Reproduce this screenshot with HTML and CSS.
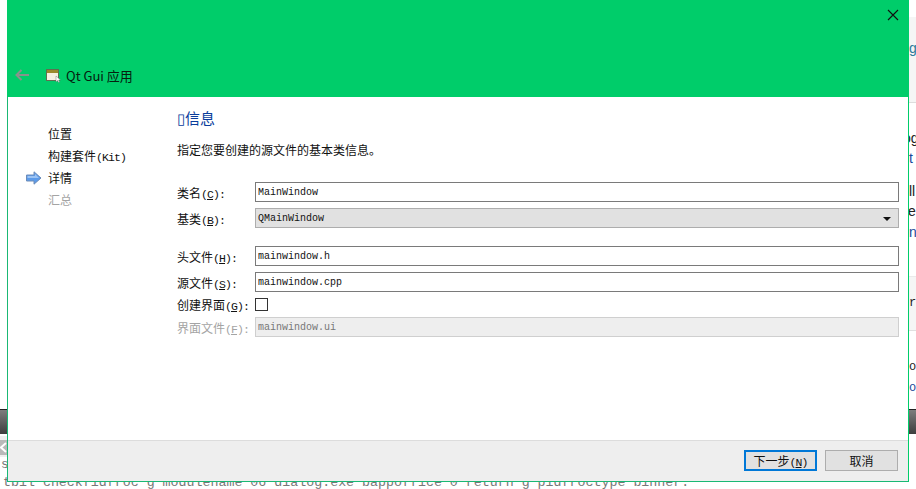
FILE: index.html
```html
<!DOCTYPE html>
<html lang="zh-CN">
<head>
<meta charset="utf-8">
<title>Qt Gui 应用</title>
<link rel="stylesheet" href="styles.css">
</head>
<body>
<div class="desk-left">
  <div class="desk-dark"></div>
  <div class="desk-band"></div>
  <div class="desk-share">
    <svg width="7" height="15" viewBox="0 0 7 15"><path d="M6 3 1 7.5 6 12" stroke="#fff" stroke-width="2" fill="none"/></svg>
  </div>
  <span class="peek p0">s</span>
</div>
<div class="desk-right">
  <div class="desk-panel top"></div>
  <div class="desk-panel mid"></div>
  <span class="peek p1">g</span>
  <span class="peek p2">og</span>
  <span class="peek p3">t</span>
  <span class="peek p4">ll</span>
  <span class="peek p5">er</span>
  <span class="peek p6">n</span>
  <span class="peek p7">re</span>
  <span class="peek p8">ou</span>
  <span class="peek p9">o</span>
  <div class="desk-dark"></div>
</div>
<div class="desk-code">tbil checkfidfroc g modulename 06 dialog.exe bappoffice 0 return g pidfroctype binner.</div>

<div class="dialog">
  <header class="head">
    <div class="close-row">
      <svg class="close" width="12" height="12" viewBox="0 0 12 12"><path d="M1 1 11 11M11 1 1 11" stroke="#111" stroke-width="1.1" fill="none"/></svg>
    </div>
    <div class="title-row">
      <svg class="back" width="14" height="12" viewBox="0 0 14 12"><path d="M6.5 1 1.5 6 6.5 11M2 6H14" stroke="#8a928c" stroke-width="2" fill="none"/></svg>
      <svg class="app" width="15" height="14" viewBox="0 0 15 14">
        <rect x="0.5" y="0.5" width="12" height="11" fill="#f4f1e0" stroke="#5f6f50"/>
        <rect x="1" y="1" width="11" height="3" fill="#9a8a2c"/>
        <path d="M10 7v6l1.6-1.4 1 2 1-.5-1-2h2z" fill="#fff" stroke="#666" stroke-width=".4"/>
      </svg>
      <span class="title">Qt Gui 应用</span>
    </div>
  </header>
  <div class="body">
    <nav class="steps">
      <div class="step">位置</div>
      <div class="step">构建套件<span class="la">(Kit)</span></div>
      <div class="step current">
        <svg class="cur" width="16" height="14" viewBox="0 0 16 14"><path d="M0.5 4H8V0.8L15 7 8 13.2V10H0.5z" fill="#5c9bea" stroke="#6c8cb8"/><path d="M1.5 5H9V3L13 7H1.5z" fill="#9cc4f4"/></svg>
        详情
      </div>
      <div class="step off">汇总</div>
    </nav>
    <main class="page">
      <h1 class="heading">▯信息</h1>
      <p class="intro">指定您要创建的源文件的基本类信息。</p>
      <div class="row r1"><label class="lab">类名<span class="la">(<u>C</u>):</span></label><input class="field" value="MainWindow"></div>
      <div class="row"><label class="lab">基类<span class="la">(<u>B</u>):</span></label><div class="combo"><span>QMainWindow</span><i class="caret"></i></div></div>
      <div class="row gap"><label class="lab">头文件<span class="la">(<u>H</u>):</span></label><input class="field" value="mainwindow.h"></div>
      <div class="row"><label class="lab">源文件<span class="la">(<u>S</u>):</span></label><input class="field" value="mainwindow.cpp"></div>
      <div class="row short"><label class="lab">创建界面<span class="la">(<u>G</u>):</span></label><span class="check"></span></div>
      <div class="row"><label class="lab off">界面文件<span class="la">(<u>F</u>):</span></label><input class="field dis" value="mainwindow.ui" disabled></div>
    </main>
  </div>
  <footer class="foot">
    <button class="btn primary">下一步<span class="la">(<u>N</u>)</span></button>
    <button class="btn">取消</button>
  </footer>
</div>
</body>
</html>
```
FILE: styles.css
```css
* { box-sizing: border-box; }
html, body { margin: 0; height: 489px; overflow: hidden; }
body {
  position: relative;
  width: 916px;
  background: #fff;
  font: 12px "Noto Sans CJK SC", sans-serif;
  color: #111;
}
.la { font-family: "Liberation Mono", monospace; font-size: 11.5px; letter-spacing: -0.9px; }

.desk-left { position: absolute; left: 0; top: 0; width: 8px; height: 489px; overflow: hidden; }
.desk-dark { position: absolute; left: 0; top: 409px; width: 100%; height: 25px; background: linear-gradient(#7d7d7d, #3e3e3e); border-top: 1px solid #222; }
.desk-band { position: absolute; left: 0; top: 436px; width: 100%; height: 21px; background: #efefef; }
.desk-share { position: absolute; left: 0; top: 440px; width: 7px; height: 15px; background: #b9b9b9; display: flex; }
.desk-right { position: absolute; right: 0; top: 0; width: 8px; height: 489px; background: #fff; overflow: hidden; }
.desk-panel { position: absolute; left: 0; width: 100%; background: #f5f5f5; }
.desk-panel.top { top: 17px; height: 86px; border-bottom: 1px solid #ddd; }
.desk-panel.mid { top: 276px; height: 55px; border-top: 1px solid #eaeaea; border-bottom: 1px solid #e0e0e0; }
.peek { position: absolute; left: 1px; font: 14px "Liberation Sans", sans-serif; color: #222; line-height: 16px; }
.p0 { top: 457px; left: 1px; font: 13px "Liberation Mono", monospace; color: #777; }
.p1 { top: 40px; color: #2a7a9a; }
.p2 { top: 130px; left: -5px; }
.p3 { top: 150px; color: #1a4a9a; }
.p4 { top: 183px; }
.p5 { top: 203px; left: 0; }
.p6 { top: 224px; color: #1a4a9a; }
.p7 { top: 296px; left: 1px; font: 12px "Liberation Mono", monospace; }
.p8 { top: 360px; font: 12px "Liberation Mono", monospace; }
.p9 { top: 381px; font: 12px "Liberation Mono", monospace; color: #1a4a9a; }
.desk-code {
  position: absolute; left: 0; top: 475px; width: 916px;
  font: 13.3px/16px "Liberation Mono", monospace; color: #777; white-space: pre;
  padding-left: 3px;
}

.dialog {
  position: absolute; left: 7px; top: 0; width: 902px; height: 482px;
  display: flex; flex-direction: column;
  background: #fff;
  border-left: 1px solid #1ab874; border-right: 1px solid #00cd6a; border-bottom: 1px solid #1ab874;
}
.head { height: 97px; margin: 0 -1px; background: #00cd6a; display: flex; flex-direction: column; justify-content: space-between; }
.close-row { display: flex; justify-content: flex-end; padding: 9px 10px 0 0; }
.title-row { display: flex; align-items: center; height: 22px; margin-bottom: 11px; padding-left: 8px; }
.back { margin-right: 17px; }
.app { margin-right: 5px; margin-top: 1px; }
.title { font: 13px "Noto Sans CJK SC", sans-serif; color: #06200f; }
.body { flex: 1; display: flex; }
.steps { width: 169px; padding: 26px 0 0 40px; }
.step { position: relative; height: 22px; line-height: 22px; }
.off { color: #a4a4a4; }
.cur { position: absolute; left: -22px; top: 4px; }
.page { flex: 1; padding: 11px 9px 0 0; }
.heading { margin: 0; font: 15px/20px "Noto Sans CJK SC", sans-serif; color: #0a3d9c; }
.intro { margin: 13px 0 0; line-height: 18px; }
.row { display: flex; align-items: center; height: 20px; margin-top: 6px; }
.row.r1 { margin-top: 23px; }
.row.gap { margin-top: 18px; }
.row.short { height: 13px; }
.lab { width: 78px; white-space: nowrap; }
.field, .combo {
  flex: 1; height: 20px; padding: 1px 2px 0; margin: 0;
  border: 1px solid #7a7a7a; border-radius: 0; background: #fff; outline: 0;
  font: 10px "Liberation Mono", monospace; color: #111;
}
.field.dis { background: #eee; border-color: #cfcfcf; color: #777; }
.combo { display: flex; align-items: center; justify-content: space-between; background: #e1e1e1; border-color: #adadad; }
.caret { width: 0; height: 0; margin-right: 5px; border: 4px solid transparent; border-top: 4px solid #111; border-bottom: 0; }
.check { width: 13px; height: 13px; border: 1px solid #333; background: #fff; }
.foot { height: 41px; display: flex; justify-content: flex-end; align-items: flex-start; gap: 8px; padding: 9px 10px 0 0; background: #eee; border-top: 1px solid #dcdcdc; }
.btn { width: 73px; height: 21px; padding: 0; background: #e1e1e1; border: 1px solid #adadad; font: 12px "Noto Sans CJK SC", sans-serif; color: #111; }
.btn.primary { border: 2px solid #0078d7; }
```
